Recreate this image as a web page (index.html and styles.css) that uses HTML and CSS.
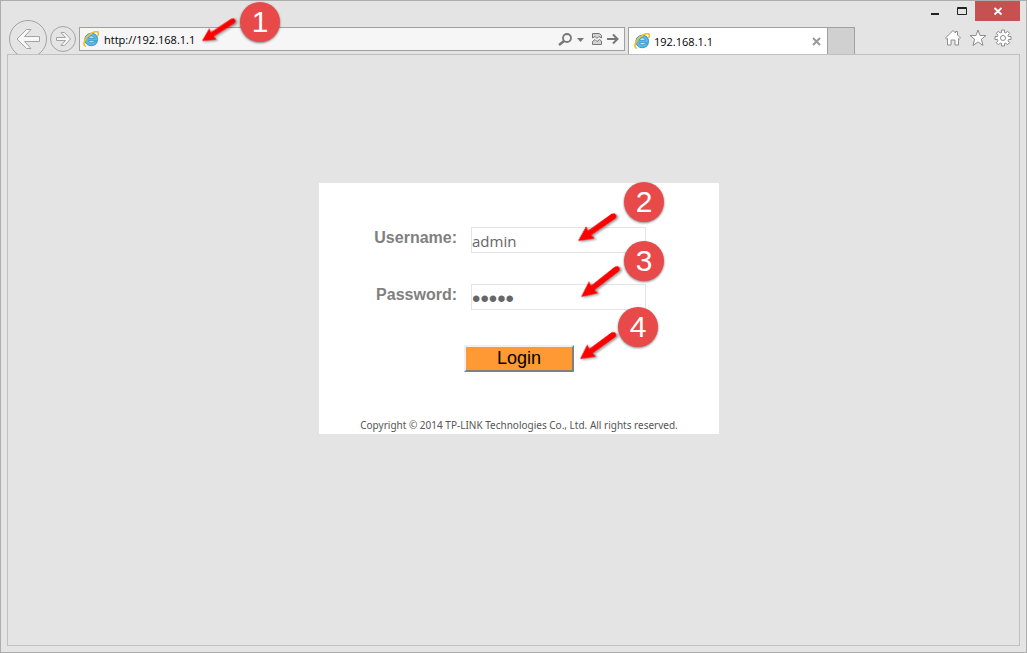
FILE: index.html
```html
<!DOCTYPE html>
<html lang="en">
<head>
    <meta charset="UTF-8">
    <meta name="viewport" content="width=device-width, initial-scale=1.0">
    <title>192.168.1.1</title>
    <link rel="stylesheet" href="styles.css">
</head>
<body>
    <!-- Shared shapes -->
    <svg class="defs" aria-hidden="true">
        <defs>
            <symbol id="ie" viewBox="0 0 16 16">
                <path d="M14.500 9.800H5.600c.3 1.300 1.400 2 3 2 1.100 0 2-.4 2.500-1.100h3.200c-.9 2.500-3 4-5.900 4-3.900 0-6.500-2.400-6.500-6.100 0-3.800 2.800-6.300 6.500-6.300 3.800 0 6.200 2.500 6.200 6.200zM5.600 7.200h5.700c-.3-1.400-1.300-2.200-2.800-2.200s-2.600.8-2.900 2.200z" fill="#5ab9e8" stroke="#2384bf" stroke-width=".8"/>
                <path d="M3 7C3.800 4.500 5.900 3.200 8.500 3.200" fill="none" stroke="#a5def7" stroke-width="1"/>
                <path d="M2.300 15.100C-.4 14.200 1.300 8.500 5.300 4.700 9.200 1.100 13.700-.3 15 1.100c.7.800.5 2-.1 3.300" fill="none" stroke="#f5bd17" stroke-width="1.600" stroke-linecap="round"/>
            </symbol>
            <g id="arrow">
                <path d="M0 0 14.500-7.500 13.500-2.800 41-3Q44-2.500 44 0T41 3L13.500 2.800 14.500 7.500z"/>
            </g>
        </defs>
    </svg>

    <div class="window">
        <header class="chrome">
            <div class="titlebar">
                <button class="win-btn" aria-label="Minimize">
                    <svg width="12" height="12"><rect x="2" y="8" width="8" height="2" fill="#222"/></svg>
                </button>
                <button class="win-btn" aria-label="Maximize">
                    <svg width="12" height="12"><path d="M1.500 2.500h9v7h-9zM1 3.500h10" fill="none" stroke="#222"/></svg>
                </button>
                <button class="win-btn win-close" aria-label="Close">
                    <svg width="12" height="12"><path d="M2.500 3l7 6.500m0-6.500l-7 6.500" stroke="#fff" stroke-width="1.800"/></svg>
                </button>
            </div>

            <div class="toolbar">
                <button class="nav-btn" aria-label="Back">
                    <svg width="38" height="38" fill="none" stroke="#a3a3a3">
                        <circle cx="19" cy="19" r="18.500"/>
                        <path d="M8 19l9.500-9.500h4.500L15.500 16.500H30.500v5H15.500l6.500 7h-4.500z" fill="#f7f7f7"/>
                    </svg>
                </button>
                <button class="nav-btn nav-forward" aria-label="Forward">
                    <svg width="26" height="26" fill="none" stroke="#a3a3a3">
                        <circle cx="13" cy="13" r="12.500"/>
                        <path d="M20.500 13l-6-6.500h-3.500l4.500 5H6.500v3h9l-4.500 5h3.500z" fill="#f7f7f7"/>
                    </svg>
                </button>

                <div class="address">
                    <svg class="favicon" width="16" height="16"><use href="#ie"/></svg>
                    <input class="address-input" type="text" value="http://192.168.1.1" aria-label="Address">
                    <button class="address-btn" aria-label="Search">
                        <svg width="29" height="14" fill="none" stroke="#777">
                            <circle cx="9" cy="6" r="4" stroke-width="1.800"/>
                            <path d="M6 9l-5 4" stroke-width="2.400"/>
                            <path d="M19 6h7l-3.500 4z" fill="#777" stroke="none"/>
                        </svg>
                    </button>
                    <button class="address-btn" aria-label="Compatibility view">
                        <svg width="10" height="12" fill="#d2d2d2" stroke="#777">
                            <path d="M.5 5V.5h7l2 2V5l-2.500-1.500-2 2-2-2z"/>
                            <path d="M.5 11.500h9V8l-2-1.500-2.500 2-2-2L.5 8.500z"/>
                        </svg>
                    </button>
                    <button class="address-btn" aria-label="Go">
                        <svg width="12" height="12" fill="none" stroke="#777" stroke-width="2">
                            <path d="M0 6h10M6 1.500L10.500 6 6 10.500"/>
                        </svg>
                    </button>

                    <svg class="callout callout-address" width="90" height="50">
                        <use href="#arrow" class="arrow" transform="translate(2 28) rotate(-33) scale(.9)"/>
                        <circle class="badge" cx="60" cy="9" r="20"/>
                        <text class="badge-text" x="60" y="19">1</text>
                    </svg>
                </div>

                <div class="tab">
                    <svg class="favicon" width="16" height="16"><use href="#ie"/></svg>
                    <span class="tab-title">192.168.1.1</span>
                    <button class="tab-close" aria-label="Close tab">
                        <svg width="9" height="9"><path d="M1 1l7 7m0-7L1 8" stroke="#999" stroke-width="2"/></svg>
                    </button>
                </div>
                <button class="new-tab" aria-label="New tab"></button>

                <div class="tools">
                    <button class="tool-btn" aria-label="Home">
                        <svg width="18" height="18" fill="#fff" stroke="#8c8c8c">
                            <path d="M9 1.500l2.500 2.500V2.500h2V6l3 3-1.200 1.200-.8-.7v6.500H11v-5H7v5H3.500V9.500l-.8.7L1.500 9z"/>
                        </svg>
                    </button>
                    <button class="tool-btn" aria-label="Favorites">
                        <svg width="18" height="18" fill="#fff" stroke="#8c8c8c">
                            <path d="M9 1l2 5.500h6l-4.600 3.700L14 16.500l-5-3.600-5 3.600 1.600-6.300L1 6.500h6z"/>
                        </svg>
                    </button>
                    <button class="tool-btn" aria-label="Tools">
                        <svg width="18" height="18" fill="#fff" stroke="#8c8c8c">
                            <path d="M7.500 1h3v2.500l1.300.5 1.700-1.800 2.200 2.200L14 6.200l.5 1.300H17v3h-2.500l-.5 1.300 1.700 1.800-2.200 2.200-1.700-1.800-1.300.5V17h-3v-2.500L6.200 14l-1.800 1.800-2.200-2.200L4 11.800l-.5-1.300H1v-3h2.500L4 6.200 2.200 4.400l2.200-2.200L6.200 4l1.300-.5z"/>
                            <circle cx="9" cy="9" r="2.500"/>
                        </svg>
                    </button>
                </div>
            </div>
        </header>

        <main class="page">
            <form class="login">
                <div class="field">
                    <label for="username">Username:</label>
                    <div class="control">
                        <input type="text" id="username" name="username" value="admin">
                        <svg class="callout" width="90" height="60">
                            <use href="#arrow" class="arrow" transform="translate(2 39) rotate(-35) scale(1.050 1)"/>
                            <circle class="badge" cx="68" cy="0" r="20"/>
                            <text class="badge-text" x="68" y="10">2</text>
                        </svg>
                    </div>
                </div>
                <div class="field">
                    <label for="password">Password:</label>
                    <div class="control">
                        <input type="password" id="password" name="password" value="admin">
                        <svg class="callout" width="90" height="60">
                            <use href="#arrow" class="arrow" transform="translate(5 38) rotate(-38) scale(1.100 1)"/>
                            <circle class="badge" cx="68" cy="2" r="20"/>
                            <text class="badge-text" x="68" y="12">3</text>
                        </svg>
                    </div>
                </div>
                <div class="actions">
                    <button type="submit" class="login-btn">Login</button>
                    <svg class="callout callout-login" width="90" height="60">
                        <use href="#arrow" class="arrow" transform="translate(6 39) rotate(-36)"/>
                        <circle class="badge" cx="64" cy="7" r="20"/>
                        <text class="badge-text" x="64" y="17">4</text>
                    </svg>
                </div>
                <p class="copyright">Copyright © 2014 TP-LINK Technologies Co., Ltd. All rights reserved.</p>
            </form>
        </main>
    </div>
</body>
</html>
```

FILE: styles.css
```css
* {
    margin: 0;
    padding: 0;
    box-sizing: border-box;
}

body {
    font-family: "Open Sans", "Noto Sans", sans-serif;
    font-size: 11px;
    color: #000;
    background: #e4e4e4;
}

button {
    border: none;
    background: none;
    font: inherit;
}

svg {
    display: block;
    flex: none;
}

.defs {
    position: absolute;
    width: 0;
    height: 0;
}

.window {
    display: flex;
    flex-direction: column;
    min-height: 100vh;
    padding: 0 6px 6px;
    border: 1px solid #adadad;
}

/* Title bar */
.titlebar {
    display: flex;
    justify-content: flex-end;
    height: 19px;
}

.win-btn {
    display: flex;
    align-items: center;
    justify-content: center;
    width: 27px;
    height: 20px;
}

.win-close {
    width: 45px;
    background: #c75050;
}

/* Toolbar */
.toolbar {
    display: flex;
    height: 34px;
    padding-left: 2px;
}

.nav-btn {
    height: 34px;
    overflow: hidden;
    display: flex;
    align-items: flex-start;
}

.nav-forward {
    margin: 0 3px;
    padding-top: 6px;
}

.address {
    position: relative;
    flex: 1;
    display: flex;
    align-items: center;
    height: 24px;
    margin-top: 7px;
    padding: 0 5px 0 3px;
    gap: 5px;
    min-width: 0;
    border: 1px solid #a0a0a0;
    background: #f6f6f6;
}

.address-input {
    flex: 1;
    min-width: 0;
    border: none;
    outline: none;
    background: transparent;
    font: inherit;
}

.tab {
    display: flex;
    align-items: center;
    gap: 4px;
    width: 200px;
    height: 27px;
    margin: 7px 0 0 3px;
    padding: 0 6px 0 5px;
    border: 1px solid #a0a0a0;
    border-bottom: none;
    background: #fff;
}

.tab-title {
    flex: 1;
}

.new-tab {
    width: 27px;
    height: 27px;
    margin-top: 7px;
    border: 1px solid #a0a0a0;
    border-width: 1px 1px 0 0;
    background: #d0d0d0;
}

.tools {
    width: 165px;
    display: flex;
    justify-content: flex-end;
    align-items: flex-start;
    gap: 7px;
    padding: 9px 8px 0 0;
}

/* Page */
.page {
    flex: 1;
    padding: 128px 0 20px 11px;
    border: 1px solid #c0c0c0;
}

.login {
    max-width: 400px;
    margin: 0 auto;
    padding: 44px 0 0;
    background: #fff;
}

.field {
    display: grid;
    grid-template-columns: 138px 175px;
    gap: 14px;
    margin-bottom: 31px;
}

.field label {
    text-align: right;
    font: bold 16px/22px "Liberation Sans", sans-serif;
    color: #808080;
}

.control {
    position: relative;
}

.control input {
    display: block;
    width: 100%;
    height: 26px;
    padding: 1px 0 0;
    border: 1px solid #e4e4e4;
    outline: none;
    background: #fff;
    font: 15px "Open Sans", sans-serif;
    color: #666;
}

.control input[type="password"] {
    padding-top: 4px;
    font: 24px/20px "Liberation Sans", sans-serif;
}

.actions {
    position: relative;
    display: flex;
    justify-content: center;
    padding-top: 4px;
}

.login-btn {
    width: 110px;
    height: 27px;
    border: 2px solid;
    border-color: #f0f0f0 #808080 #808080 #f0f0f0;
    background: #ff9933;
    font: 18px "Liberation Sans", sans-serif;
    color: #000;
}

.copyright {
    padding: 46px 0 2px;
    text-align: center;
    font: 10px/14px "Noto Sans", sans-serif;
    color: #555;
}

/* Numbered callouts */
.callout {
    position: absolute;
    left: 105px;
    top: -25px;
    z-index: 1;
    overflow: visible;
    pointer-events: none;
}

.callout-address {
    left: 120px;
    top: -15px;
}

.callout-login {
    left: 255px;
    top: -21px;
}

.arrow {
    fill: #fe0000;
    filter: drop-shadow(1px 2px 1px rgba(0, 0, 0, 0.4));
}

.badge {
    fill: #e84a4a;
    filter: drop-shadow(0 1px 1px rgba(0, 0, 0, 0.5));
}

.badge-text {
    fill: #fff;
    font-family: "Liberation Sans", sans-serif;
    font-size: 30px;
    text-anchor: middle;
}
```
